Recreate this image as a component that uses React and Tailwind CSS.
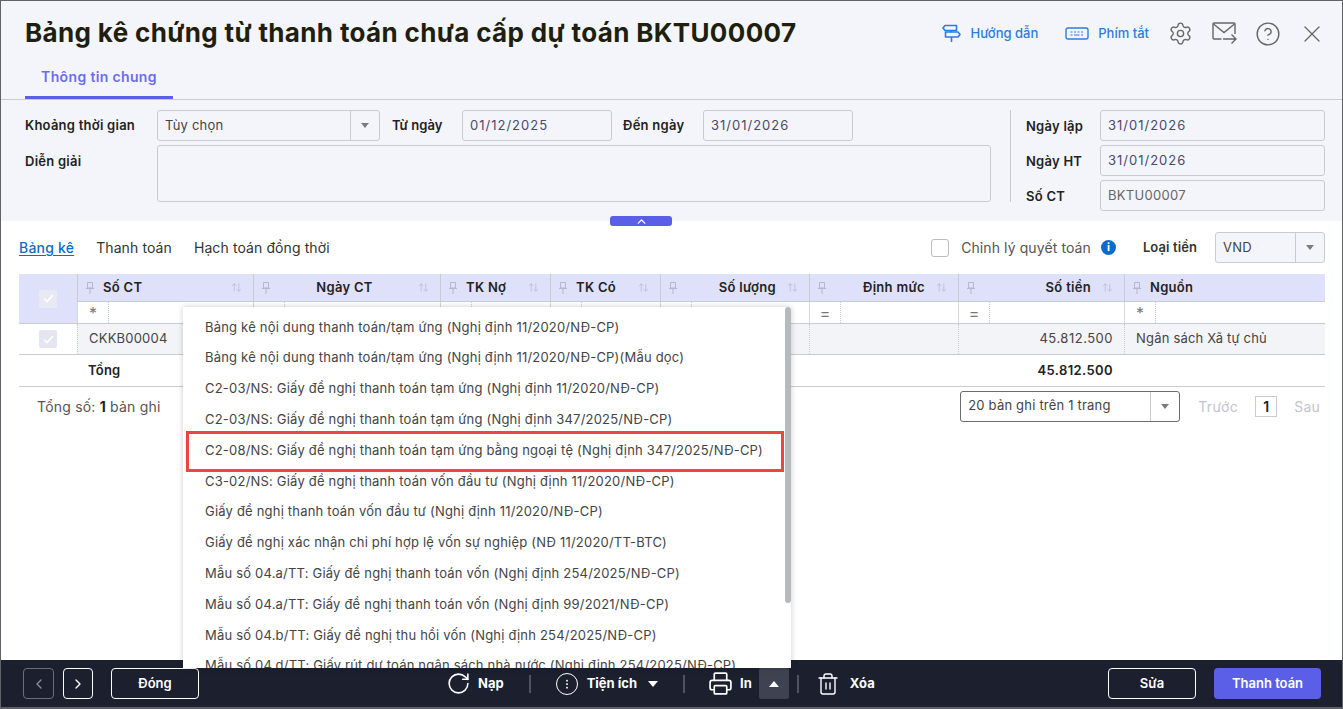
import React from "react";
import { ArrowUpDown, ChevronLeft, ChevronRight, ChevronUp, CircleHelp, Ellipsis, Printer, RotateCw, Settings, Trash2, X } from "lucide-react";

const COLUMNS = [
  { name: "Số CT", w: "w-[176px]", align: "left", filter: "*" },
  { name: "Ngày CT", w: "w-[187px]", align: "center", filter: "" },
  { name: "TK Nợ", w: "w-[110px]", align: "left", filter: "" },
  { name: "TK Có", w: "w-[110px]", align: "left", filter: "" },
  { name: "Số lượng", w: "w-[149px]", align: "right", filter: "=" },
  { name: "Định mức", w: "w-[149px]", align: "right", filter: "=" },
  { name: "Số tiền", w: "w-[166px]", align: "right", filter: "=" },
  { name: "Nguồn", w: "flex-1", align: "left", filter: "*", noSort: true },
];

const MENU = [
  "Bảng kê nội dung thanh toán/tạm ứng (Nghị định 11/2020/NĐ-CP)",
  "Bảng kê nội dung thanh toán/tạm ứng (Nghị định 11/2020/NĐ-CP)(Mẫu dọc)",
  "C2-03/NS: Giấy đề nghị thanh toán tạm ứng (Nghị định 11/2020/NĐ-CP)",
  "C2-03/NS: Giấy đề nghị thanh toán tạm ứng (Nghị định 347/2025/NĐ-CP)",
  "C2-08/NS: Giấy đề nghị thanh toán tạm ứng bằng ngoại tệ (Nghị định 347/2025/NĐ-CP)",
  "C3-02/NS: Giấy đề nghị thanh toán vốn đầu tư (Nghị định 11/2020/NĐ-CP)",
  "Giấy đề nghị thanh toán vốn đầu tư (Nghị định 11/2020/NĐ-CP)",
  "Giấy đề nghị xác nhận chi phí hợp lệ vốn sự nghiệp (NĐ 11/2020/TT-BTC)",
  "Mẫu số 04.a/TT: Giấy đề nghị thanh toán vốn (Nghị định 254/2025/NĐ-CP)",
  "Mẫu số 04.a/TT: Giấy đề nghị thanh toán vốn (Nghị định 99/2021/NĐ-CP)",
  "Mẫu số 04.b/TT: Giấy đề nghị thu hồi vốn (Nghị định 254/2025/NĐ-CP)",
  "Mẫu số 04.d/TT: Giấy rút dự toán ngân sách nhà nước (Nghị định 254/2025/NĐ-CP)",
];

function PinIcon() {
  return (
    <svg width="10" height="14" viewBox="0 0 10 14" fill="none" stroke="#b4b8c8" strokeWidth="1" className="shrink-0">
      <path d="M2.5 1.5h5v5.5h-5zM1 7.5h8M5 8v5" />
    </svg>
  );
}

function SignIcon() {
  return (
    <svg width="19" height="19" viewBox="0 0 19 19" fill="none" stroke="currentColor" strokeWidth="1.6" strokeLinejoin="round" className="mr-[9px]">
      <path d="M3 1.5H14.5V6.5H3L1 4Z" />
      <path d="M3.5 8H16L18 10.5L16 13H3.5Z" />
      <path d="M9.5 6.5V8M9.5 13V18" />
    </svg>
  );
}

function MailSendIcon() {
  return (
    <svg width="25" height="23" viewBox="0 0 25 23" fill="none" stroke="#666" strokeWidth="1.4" className="ml-[19px]">
      <path d="M9.5 17H2a1 1 0 0 1-1-1V2a1 1 0 0 1 1-1h20a1 1 0 0 1 1 1v10" />
      <path d="M1.5 2L12 10.5L22.5 2" />
      <path d="M11 17H24M19.5 12.5L24 17L19.5 21.5" />
    </svg>
  );
}

function Caret({ className = "border-t-[#7b7b7b]" }) {
  return <span className={`w-0 h-0 border-x-[4px] border-x-transparent border-t-[5px] ${className}`} />;
}

function Field({ value, className = "", text = "text-[#4a4a6a] tracking-[1px]" }) {
  return (
    <div className={`h-[31px] border border-[#c9cbd1] rounded-[3px] px-[7px] flex items-center text-[13px] ${text} ${className}`}>
      {value}
    </div>
  );
}

function SelectBox({ value, className = "", border = "border-[#c9cbd1]", btn = "w-[29px]" }) {
  return (
    <div className={`h-[31px] border rounded-[3px] flex items-center text-[13px] text-[#444] tracking-[0.2px] ${border} ${className}`}>
      <span className="flex-1 pl-[7px]">{value}</span>
      <span className={`h-full border-l border-[#c9cbd1] flex items-center justify-center ${btn}`}>
        <Caret />
      </span>
    </div>
  );
}

function CheckCell({ bg }) {
  return (
    <span className={`w-[18px] h-[18px] rounded-[2px] flex items-center justify-center text-white ${bg}`}>
      <svg width="11" height="9" viewBox="0 0 11 9" fill="none" stroke="currentColor" strokeWidth="1.6">
        <path d="M1 4.5l3 3 6-6.5" />
      </svg>
    </span>
  );
}

function Sep({ className = "" }) {
  return <span className={`block shrink-0 w-[2px] h-[18px] bg-[#4f5260] ${className}`} />;
}

export default function App() {
  return (
    <div className="relative w-[1343px] h-[709px] overflow-hidden flex flex-col bg-white border-x border-t border-[#5f6368] font-['Inter','Noto_Sans',sans-serif] text-[#222]">
      {/* header */}
      <header className="h-[99px] shrink-0 bg-[#f4f5fa] border-b border-[#c9cbd1] flex flex-col">
        <div className="flex items-center justify-between pl-6 pr-[16px] h-[63px]">
          <h1 className="text-[26px] font-bold tracking-[0.35px] text-[#1f1f0f] whitespace-nowrap">Bảng kê chứng từ thanh toán chưa cấp dự toán BKTU00007</h1>
          <div className="flex items-center pt-[3px] text-[#2a7de1] text-[13px] font-medium">
            <SignIcon />
            <span>Hướng dẫn</span>
            <svg width="24" height="13" viewBox="0 0 24 13" fill="none" stroke="currentColor" className="ml-[27px] mr-[9px]">
              <rect x="1" y="1" width="22" height="11" rx="2" strokeWidth="1.4" />
              <path d="M5.5 5h2M9 5h2M12.5 5h2M16 5h2M5.5 8h2M9 8h5.5M16 8h2" strokeWidth="1.2" />
            </svg>
            <span>Phím tắt</span>
            <Settings size={25} strokeWidth={1.3} className="ml-[19px] text-[#666]" />
            <MailSendIcon />
            <CircleHelp size={26} strokeWidth={1.3} className="ml-[18px] text-[#666]" />
            <X size={28} strokeWidth={1.1} className="ml-[17px] text-[#666]" />
          </div>
        </div>
        <div className="flex-1 flex items-end pl-6">
          <div className="w-[148px] h-[36px] border-b-[3px] border-[#5b5fe8] flex items-center justify-center pb-[6px] text-[14px] font-semibold tracking-[0.35px] text-[#6c6cf0]">
            Thông tin chung
          </div>
        </div>
      </header>

      {/* form */}
      <section className="relative h-[121px] shrink-0 bg-[#f4f5fa] flex pt-[10px] pl-6 pr-[17px]">
        <div className="w-[966px] flex flex-col gap-[4px]">
          <div className="flex items-center h-[31px] text-[13px] font-semibold tracking-[0.25px]">
            <span className="w-[132px]">Khoảng thời gian</span>
            <SelectBox value="Tùy chọn" className="w-[223px] font-normal" />
            <span className="ml-[12px] w-[70px] tracking-normal">Từ ngày</span>
            <Field value="01/12/2025" className="w-[150px] font-normal" />
            <span className="ml-[11px] w-[80px]">Đến ngày</span>
            <Field value="31/01/2026" className="w-[150px] font-normal" />
          </div>
          <div className="flex">
            <span className="w-[132px] text-[13px] font-semibold tracking-[0.25px] pt-[7px]">Diễn giải</span>
            <div className="w-[834px] h-[57px] border border-[#c9cbd1] rounded-[3px]" />
          </div>
        </div>
        <div className="ml-[19px] w-px h-[92px] bg-[#c9cbd1]" />
        <div className="ml-[15px] flex-1 flex flex-col gap-[4px] text-[13px] font-semibold tracking-[0.25px]">
          {[["Ngày lập", "31/01/2026"], ["Ngày HT", "31/01/2026"], ["Số CT", "BKTU00007"]].map(([label, value]) => (
            <div key={label} className="flex items-center">
              <span className="w-[74px] pt-[2px]">{label}</span>
              {label === "Số CT" ? (
                <Field value={value} className="flex-1 font-normal" text="text-[#666] tracking-[0.3px]" />
              ) : (
                <Field value={value} className="flex-1 font-normal" />
              )}
            </div>
          ))}
        </div>
        <div className="absolute left-[609px] bottom-[-5px] w-[62px] h-[10px] rounded-[3px] bg-[#5b5fe8] flex items-center justify-center text-white">
          <ChevronUp size={13} strokeWidth={2.5} />
        </div>
      </section>

      {/* table area */}
      <main className="flex-1 min-h-0 pl-[18px] pr-[17px] flex flex-col">
        <div className="h-[53px] shrink-0 flex items-center text-[14px] tracking-[0.1px] text-[#333]">
          <span className="text-[#0b6bcb] font-medium underline underline-offset-2 tracking-[0.2px]">Bảng kê</span>
          <span className="ml-[22px]">Thanh toán</span>
          <span className="ml-[22px]">Hạch toán đồng thời</span>
          <span className="ml-auto w-[18px] h-[18px] border border-[#b9bbc6] rounded-[3px] bg-white" />
          <span className="ml-[12px] text-[#555]">Chỉnh lý quyết toán</span>
          <span className="ml-[10px] w-[15px] h-[15px] rounded-full bg-[#0b6bcb] text-white text-[11px] font-bold flex items-center justify-center">i</span>
          <span className="ml-[27px] text-[13px] font-semibold">Loại tiền</span>
          <SelectBox value="VND" className="ml-[18px] w-[110px] bg-[#f4f5fa]" />
        </div>

        <div className="flex flex-col text-[13px]">
          {/* head + filter */}
          <div className="flex">
            <div className="w-[58px] bg-[#dfe1fa] flex items-center justify-center border-b border-[#c9cbd1]">
              <CheckCell bg="bg-[#e8e9f2]" />
            </div>
            <div className="flex-1 flex flex-col">
              <div className="h-[28px] flex bg-[#dfe1fa] font-semibold tracking-[0.3px] text-[#222] border-b border-[#c9cbd1]">
                {COLUMNS.map((c) => (
                  <div key={c.name} className={`${c.w} flex items-center pl-[7px] pr-[11px] border-l border-[#c9cbd1]`}>
                    <PinIcon />
                    <span
                      className={
                        c.align === "right"
                          ? "flex-1 text-right pr-[11px]"
                          : c.align === "center"
                            ? "flex-1 text-center"
                            : "flex-1 pl-[8px]"
                      }
                    >
                      {c.name}
                    </span>
                    {!c.noSort && <ArrowUpDown size={11} strokeWidth={1.2} className="text-[#a9adc2]" />}
                  </div>
                ))}
              </div>
              <div className="h-[22px] flex border-b border-[#c9cbd1] text-[#777] text-[16px]">
                {COLUMNS.map((c) => (
                  <div key={c.name} className={`${c.w} flex border-l border-[#d5d7dd]`}>
                    <span className="w-[31px] flex items-center justify-center border-r border-dotted border-[#c9cbd1]">{c.filter}</span>
                  </div>
                ))}
              </div>
            </div>
          </div>
          {/* row */}
          <div className="h-[31px] flex bg-[#f3f4f8] border-b border-[#c9cbd1] text-[#444] tracking-[0.2px]">
            <div className="w-[58px] bg-white flex items-center justify-center">
              <CheckCell bg="bg-[#e4e5f0]" />
            </div>
            {COLUMNS.map((c) => (
              <div key={c.name} className={`${c.w} flex items-center border-l border-dotted border-[#c9cbd1] px-[11px]`}>
                {c.name === "Số CT" && "CKKB00004"}
                {c.name === "Số tiền" && <span className="w-full text-right tracking-[0.5px]">45.812.500</span>}
                {c.name === "Nguồn" && "Ngân sách Xã tự chủ"}
              </div>
            ))}
          </div>
          {/* total */}
          <div className="h-[32px] flex border-b border-[#c9cbd1] font-semibold items-center tracking-[0.2px]">
            <div className="w-[58px]" />
            <div className="w-[176px] pl-[11px]">Tổng</div>
            <div className="w-[871px] text-right pr-[11px] tracking-[0.4px]">45.812.500</div>
          </div>
        </div>

        {/* pager */}
        <div className="h-[38px] shrink-0 flex items-center text-[14px] tracking-[0.2px] text-[#555]">
          <span className="ml-[18px]">
            Tổng số: <b className="text-[#222]">1</b> bản ghi
          </span>
          <SelectBox value="20 bản ghi trên 1 trang" border="border-[#6b6b6b]" className="ml-auto w-[220px]" />
          <span className="ml-[18px] text-[#c2c4cc] tracking-[0.4px]">Trước</span>
          <span className="ml-[17px] w-[22px] h-[21px] border border-[#c9cbd1] flex items-center justify-center font-semibold text-[#222]">1</span>
          <span className="ml-[17px] mr-[5px] text-[#c2c4cc]">Sau</span>
        </div>
      </main>

      {/* footer */}
      <footer className="h-[49px] shrink-0 bg-[#1c1f2e] border-b-2 border-[#5f6368] flex items-center pl-[22px] pr-[21px] text-white text-[13px] font-semibold">
        <span className="w-[31px] h-[31px] rounded-[4px] border border-[#6b6e7a] text-[#8a8d99] flex items-center justify-center">
          <ChevronLeft size={16} />
        </span>
        <span className="ml-[9px] w-[30px] h-[31px] rounded-[4px] border border-white flex items-center justify-center">
          <ChevronRight size={16} />
        </span>
        <span className="ml-[18px] w-[88px] h-[31px] rounded-[4px] border border-white flex items-center justify-center">Đóng</span>
        <RotateCw size={25} strokeWidth={1.5} className="ml-[247px]" />
        <span className="ml-[7px] font-bold">Nạp</span>
        <Sep className="ml-[25px]" />
        <span className="ml-[25px] w-[22px] h-[22px] rounded-full border-[1.5px] border-white flex items-center justify-center">
          <Ellipsis size={12} className="rotate-90" />
        </span>
        <span className="ml-[9px] font-bold">Tiện ích</span>
        <Caret className="ml-[11px] border-x-[5px] border-t-[6px] border-t-white" />
        <Sep className="ml-[25px]" />
        <Printer size={25} strokeWidth={1.6} className="ml-[23px]" />
        <span className="ml-[7px] font-bold">In</span>
        <span className="ml-[7px] w-[30px] h-[31px] rounded-[2px] bg-[#3f4250] flex items-center justify-center">
          <Caret className="rotate-180 border-x-[5px] border-t-[6px] border-t-white" />
        </span>
        <Sep className="ml-[8px]" />
        <Trash2 size={24} strokeWidth={1.4} className="ml-[17px]" />
        <span className="ml-[10px] font-bold">Xóa</span>
        <span className="ml-auto w-[88px] h-[31px] rounded-[4px] border border-white flex items-center justify-center">Sửa</span>
        <span className="ml-[18px] w-[107px] h-[31px] rounded-[4px] bg-[#5b5fe8] flex items-center justify-center">Thanh toán</span>
      </footer>

      {/* print menu */}
      <div className="absolute left-[182px] top-[306px] w-[608px] h-[361px] overflow-hidden bg-white pt-[5px] shadow-[0_0_6px_rgba(0,0,0,0.2)] text-[13px] text-[#444]">
        {MENU.map((m) => (
          <div key={m} className="h-[30.8px] pl-[22px] flex items-center whitespace-nowrap tracking-[0.2px]">{m}</div>
        ))}
        <div className="absolute left-[3px] top-[124px] w-[598px] h-[41px] border-[3px] border-[#ef4444]" />
        <div className="absolute right-0 top-0 w-[6px] h-[296px] rounded-[3px] bg-[#b5b9c0]" />
      </div>
    </div>
  );
}
